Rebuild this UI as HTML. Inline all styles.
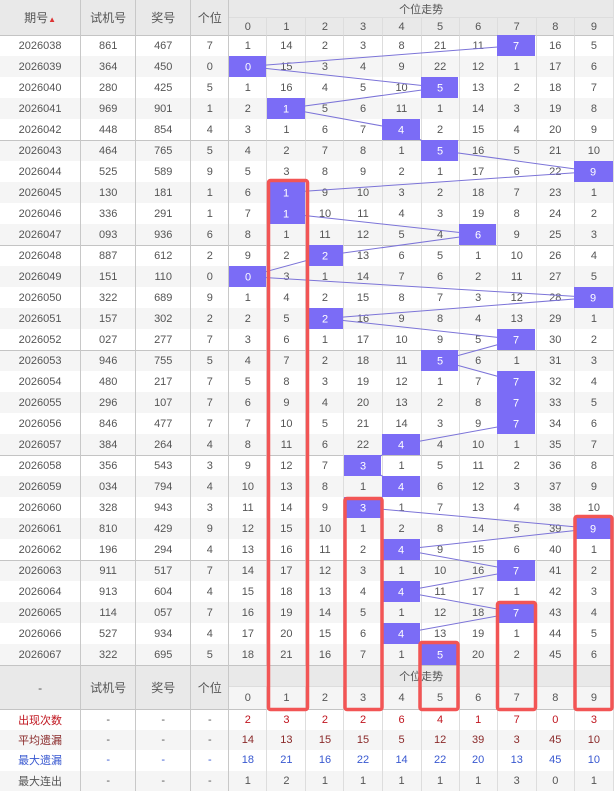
<!DOCTYPE html>
<html><head><meta charset="utf-8"><style>
body{margin:0;width:614px;height:793px;background:#fff;position:relative;overflow:hidden;font-family:"Liberation Sans","Noto Sans CJK SC",sans-serif}
table{border-collapse:separate;border-spacing:0;table-layout:fixed;width:614px;font-size:11px;color:#555;position:absolute;left:0;top:0}
td{padding:0;text-align:center;height:21px;box-sizing:border-box;border-right:1px solid #ddd;white-space:nowrap;overflow:hidden}
td.m{border-right:1px solid #c8c8c8}
tbody tr:nth-child(even) td{background:#f5f5f5}
tr.g td{border-top:1px solid #c4c4c4}
.h td{background:#e9e9e9;font-size:12px;color:#555}
.h2 td{font-size:11px;height:17px}
.fh td{background:#e9e9e9}
.f td{height:20.5px}
.r{color:#c0141e}.b{color:#8a2a2a}.u{color:#3858d0}
svg{position:absolute;left:0;top:0}
</style></head><body>
<table>
<colgroup><col style="width:81px"><col style="width:55px"><col style="width:55px"><col style="width:38px"><col style="width:38px"><col style="width:39px"><col style="width:38px"><col style="width:38px"><col style="width:39px"><col style="width:38px"><col style="width:38px"><col style="width:39px"><col style="width:38px"><col style="width:39px"></colgroup>
<thead>
<tr class="h"><td class="m" rowspan="2" style="height:35px">期号<span style="font-size:8px;color:#d33">▲</span></td><td class="m" rowspan="2">试机号</td><td class="m" rowspan="2">奖号</td><td class="m" rowspan="2">个位</td><td colspan="10" style="height:18px;font-size:11px;border-bottom:1px solid #ddd">个位走势</td></tr>
<tr class="h h2"><td>0</td><td>1</td><td>2</td><td>3</td><td>4</td><td>5</td><td>6</td><td>7</td><td>8</td><td>9</td></tr>
</thead>
<tbody>
<tr class="g"><td class="m">2026038</td><td class="m">861</td><td class="m">467</td><td class="m">7</td><td>1</td><td>14</td><td>2</td><td>3</td><td>8</td><td>21</td><td>11</td><td>7</td><td>16</td><td>5</td></tr>
<tr><td class="m">2026039</td><td class="m">364</td><td class="m">450</td><td class="m">0</td><td>0</td><td>15</td><td>3</td><td>4</td><td>9</td><td>22</td><td>12</td><td>1</td><td>17</td><td>6</td></tr>
<tr><td class="m">2026040</td><td class="m">280</td><td class="m">425</td><td class="m">5</td><td>1</td><td>16</td><td>4</td><td>5</td><td>10</td><td>5</td><td>13</td><td>2</td><td>18</td><td>7</td></tr>
<tr><td class="m">2026041</td><td class="m">969</td><td class="m">901</td><td class="m">1</td><td>2</td><td>1</td><td>5</td><td>6</td><td>11</td><td>1</td><td>14</td><td>3</td><td>19</td><td>8</td></tr>
<tr><td class="m">2026042</td><td class="m">448</td><td class="m">854</td><td class="m">4</td><td>3</td><td>1</td><td>6</td><td>7</td><td>4</td><td>2</td><td>15</td><td>4</td><td>20</td><td>9</td></tr>
<tr class="g"><td class="m">2026043</td><td class="m">464</td><td class="m">765</td><td class="m">5</td><td>4</td><td>2</td><td>7</td><td>8</td><td>1</td><td>5</td><td>16</td><td>5</td><td>21</td><td>10</td></tr>
<tr><td class="m">2026044</td><td class="m">525</td><td class="m">589</td><td class="m">9</td><td>5</td><td>3</td><td>8</td><td>9</td><td>2</td><td>1</td><td>17</td><td>6</td><td>22</td><td>9</td></tr>
<tr><td class="m">2026045</td><td class="m">130</td><td class="m">181</td><td class="m">1</td><td>6</td><td>1</td><td>9</td><td>10</td><td>3</td><td>2</td><td>18</td><td>7</td><td>23</td><td>1</td></tr>
<tr><td class="m">2026046</td><td class="m">336</td><td class="m">291</td><td class="m">1</td><td>7</td><td>1</td><td>10</td><td>11</td><td>4</td><td>3</td><td>19</td><td>8</td><td>24</td><td>2</td></tr>
<tr><td class="m">2026047</td><td class="m">093</td><td class="m">936</td><td class="m">6</td><td>8</td><td>1</td><td>11</td><td>12</td><td>5</td><td>4</td><td>6</td><td>9</td><td>25</td><td>3</td></tr>
<tr class="g"><td class="m">2026048</td><td class="m">887</td><td class="m">612</td><td class="m">2</td><td>9</td><td>2</td><td>2</td><td>13</td><td>6</td><td>5</td><td>1</td><td>10</td><td>26</td><td>4</td></tr>
<tr><td class="m">2026049</td><td class="m">151</td><td class="m">110</td><td class="m">0</td><td>0</td><td>3</td><td>1</td><td>14</td><td>7</td><td>6</td><td>2</td><td>11</td><td>27</td><td>5</td></tr>
<tr><td class="m">2026050</td><td class="m">322</td><td class="m">689</td><td class="m">9</td><td>1</td><td>4</td><td>2</td><td>15</td><td>8</td><td>7</td><td>3</td><td>12</td><td>28</td><td>9</td></tr>
<tr><td class="m">2026051</td><td class="m">157</td><td class="m">302</td><td class="m">2</td><td>2</td><td>5</td><td>2</td><td>16</td><td>9</td><td>8</td><td>4</td><td>13</td><td>29</td><td>1</td></tr>
<tr><td class="m">2026052</td><td class="m">027</td><td class="m">277</td><td class="m">7</td><td>3</td><td>6</td><td>1</td><td>17</td><td>10</td><td>9</td><td>5</td><td>7</td><td>30</td><td>2</td></tr>
<tr class="g"><td class="m">2026053</td><td class="m">946</td><td class="m">755</td><td class="m">5</td><td>4</td><td>7</td><td>2</td><td>18</td><td>11</td><td>5</td><td>6</td><td>1</td><td>31</td><td>3</td></tr>
<tr><td class="m">2026054</td><td class="m">480</td><td class="m">217</td><td class="m">7</td><td>5</td><td>8</td><td>3</td><td>19</td><td>12</td><td>1</td><td>7</td><td>7</td><td>32</td><td>4</td></tr>
<tr><td class="m">2026055</td><td class="m">296</td><td class="m">107</td><td class="m">7</td><td>6</td><td>9</td><td>4</td><td>20</td><td>13</td><td>2</td><td>8</td><td>7</td><td>33</td><td>5</td></tr>
<tr><td class="m">2026056</td><td class="m">846</td><td class="m">477</td><td class="m">7</td><td>7</td><td>10</td><td>5</td><td>21</td><td>14</td><td>3</td><td>9</td><td>7</td><td>34</td><td>6</td></tr>
<tr><td class="m">2026057</td><td class="m">384</td><td class="m">264</td><td class="m">4</td><td>8</td><td>11</td><td>6</td><td>22</td><td>4</td><td>4</td><td>10</td><td>1</td><td>35</td><td>7</td></tr>
<tr class="g"><td class="m">2026058</td><td class="m">356</td><td class="m">543</td><td class="m">3</td><td>9</td><td>12</td><td>7</td><td>3</td><td>1</td><td>5</td><td>11</td><td>2</td><td>36</td><td>8</td></tr>
<tr><td class="m">2026059</td><td class="m">034</td><td class="m">794</td><td class="m">4</td><td>10</td><td>13</td><td>8</td><td>1</td><td>4</td><td>6</td><td>12</td><td>3</td><td>37</td><td>9</td></tr>
<tr><td class="m">2026060</td><td class="m">328</td><td class="m">943</td><td class="m">3</td><td>11</td><td>14</td><td>9</td><td>3</td><td>1</td><td>7</td><td>13</td><td>4</td><td>38</td><td>10</td></tr>
<tr><td class="m">2026061</td><td class="m">810</td><td class="m">429</td><td class="m">9</td><td>12</td><td>15</td><td>10</td><td>1</td><td>2</td><td>8</td><td>14</td><td>5</td><td>39</td><td>9</td></tr>
<tr><td class="m">2026062</td><td class="m">196</td><td class="m">294</td><td class="m">4</td><td>13</td><td>16</td><td>11</td><td>2</td><td>4</td><td>9</td><td>15</td><td>6</td><td>40</td><td>1</td></tr>
<tr class="g"><td class="m">2026063</td><td class="m">911</td><td class="m">517</td><td class="m">7</td><td>14</td><td>17</td><td>12</td><td>3</td><td>1</td><td>10</td><td>16</td><td>7</td><td>41</td><td>2</td></tr>
<tr><td class="m">2026064</td><td class="m">913</td><td class="m">604</td><td class="m">4</td><td>15</td><td>18</td><td>13</td><td>4</td><td>4</td><td>11</td><td>17</td><td>1</td><td>42</td><td>3</td></tr>
<tr><td class="m">2026065</td><td class="m">114</td><td class="m">057</td><td class="m">7</td><td>16</td><td>19</td><td>14</td><td>5</td><td>1</td><td>12</td><td>18</td><td>7</td><td>43</td><td>4</td></tr>
<tr><td class="m">2026066</td><td class="m">527</td><td class="m">934</td><td class="m">4</td><td>17</td><td>20</td><td>15</td><td>6</td><td>4</td><td>13</td><td>19</td><td>1</td><td>44</td><td>5</td></tr>
<tr><td class="m">2026067</td><td class="m">322</td><td class="m">695</td><td class="m">5</td><td>18</td><td>21</td><td>16</td><td>7</td><td>1</td><td>5</td><td>20</td><td>2</td><td>45</td><td>6</td></tr>
</tbody>
<tbody>
<tr class="h fh g"><td class="m" rowspan="2" style="height:44px">-</td><td class="m" rowspan="2">试机号</td><td class="m" rowspan="2">奖号</td><td class="m" rowspan="2">个位</td><td colspan="10" style="height:22px;font-size:11px;border-bottom:1px solid #ddd">个位走势</td></tr>
<tr class="h fh"><td style="height:22px;font-size:11px">0</td><td style="font-size:11px">1</td><td style="font-size:11px">2</td><td style="font-size:11px">3</td><td style="font-size:11px">4</td><td style="font-size:11px">5</td><td style="font-size:11px">6</td><td style="font-size:11px">7</td><td style="font-size:11px">8</td><td style="font-size:11px">9</td></tr>
</tbody>
<tbody>
<tr class="f g"><td class="m r">出现次数</td><td class="m">-</td><td class="m">-</td><td class="m">-</td><td class="r">2</td><td class="r">3</td><td class="r">2</td><td class="r">2</td><td class="r">6</td><td class="r">4</td><td class="r">1</td><td class="r">7</td><td class="r">0</td><td class="r">3</td></tr>
<tr class="f"><td class="m b">平均遗漏</td><td class="m">-</td><td class="m">-</td><td class="m">-</td><td class="b">14</td><td class="b">13</td><td class="b">15</td><td class="b">15</td><td class="b">5</td><td class="b">12</td><td class="b">39</td><td class="b">3</td><td class="b">45</td><td class="b">10</td></tr>
<tr class="f"><td class="m u">最大遗漏</td><td class="m u">-</td><td class="m u">-</td><td class="m u">-</td><td class="u">18</td><td class="u">21</td><td class="u">16</td><td class="u">22</td><td class="u">14</td><td class="u">22</td><td class="u">20</td><td class="u">13</td><td class="u">45</td><td class="u">10</td></tr>
<tr class="f"><td class="m">最大连出</td><td class="m">-</td><td class="m">-</td><td class="m">-</td><td>1</td><td>2</td><td>1</td><td>1</td><td>1</td><td>1</td><td>1</td><td>3</td><td>0</td><td>1</td></tr>
</tbody>
</table>
<svg width="614" height="793" font-family="Liberation Sans, sans-serif" font-size="11" text-anchor="middle">
<polyline fill="none" stroke="#7c74d8" stroke-width="1" points="516.5,45.5 248,66.5 440,87.5 286.5,108.5 401.5,129.5 440,150.5 593.5,171.5 286.5,192.5 286.5,213.5 478,234.5 325,255.5 248,276.5 593.5,297.5 325,318.5 516.5,339.5 440,360.5 516.5,381.5 516.5,402.5 516.5,423.5 401.5,444.5 363,465.5 401.5,486.5 363,507.5 593.5,528.5 401.5,549.5 516.5,570.5 401.5,591.5 516.5,612.5 401.5,633.5 440,654.5"/>
<g fill="#7b6cf6">
<rect x="497" y="35" width="38" height="21"/><rect x="229" y="56" width="37" height="21"/><rect x="421" y="77" width="37" height="21"/><rect x="267" y="98" width="38" height="21"/><rect x="382" y="119" width="38" height="21"/><rect x="421" y="140" width="37" height="21"/><rect x="574" y="161" width="39" height="21"/><rect x="267" y="182" width="38" height="21"/><rect x="267" y="203" width="38" height="21"/><rect x="459" y="224" width="37" height="21"/><rect x="306" y="245" width="37" height="21"/><rect x="229" y="266" width="37" height="21"/><rect x="574" y="287" width="39" height="21"/><rect x="306" y="308" width="37" height="21"/><rect x="497" y="329" width="38" height="21"/><rect x="421" y="350" width="37" height="21"/><rect x="497" y="371" width="38" height="21"/><rect x="497" y="392" width="38" height="21"/><rect x="497" y="413" width="38" height="21"/><rect x="382" y="434" width="38" height="21"/><rect x="344" y="455" width="37" height="21"/><rect x="382" y="476" width="38" height="21"/><rect x="344" y="497" width="37" height="21"/><rect x="574" y="518" width="39" height="21"/><rect x="382" y="539" width="38" height="21"/><rect x="497" y="560" width="38" height="21"/><rect x="382" y="581" width="38" height="21"/><rect x="497" y="602" width="38" height="21"/><rect x="382" y="623" width="38" height="21"/><rect x="421" y="644" width="37" height="21"/>
</g>
<g fill="#fff">
<text x="516" y="49.5">7</text><text x="248" y="70.5">0</text><text x="440" y="91.5">5</text><text x="286" y="112.5">1</text><text x="401" y="133.5">4</text><text x="440" y="154.5">5</text><text x="593" y="175.5">9</text><text x="286" y="196.5">1</text><text x="286" y="217.5">1</text><text x="478" y="238.5">6</text><text x="325" y="259.5">2</text><text x="248" y="280.5">0</text><text x="593" y="301.5">9</text><text x="325" y="322.5">2</text><text x="516" y="343.5">7</text><text x="440" y="364.5">5</text><text x="516" y="385.5">7</text><text x="516" y="406.5">7</text><text x="516" y="427.5">7</text><text x="401" y="448.5">4</text><text x="363" y="469.5">3</text><text x="401" y="490.5">4</text><text x="363" y="511.5">3</text><text x="593" y="532.5">9</text><text x="401" y="553.5">4</text><text x="516" y="574.5">7</text><text x="401" y="595.5">4</text><text x="516" y="616.5">7</text><text x="401" y="637.5">4</text><text x="440" y="658.5">5</text>
</g>
<g fill="none" stroke="#f25555" stroke-width="3.5">
<rect x="268.5" y="180.5" width="39" height="529" rx="2"/>
<rect x="345" y="498.5" width="37" height="211" rx="2"/>
<rect x="420" y="642.5" width="38" height="67" rx="2"/>
<rect x="497.5" y="602.5" width="38" height="107" rx="2"/>
<rect x="575" y="516.5" width="37" height="193" rx="2"/>
</g>
</svg>
</body></html>
